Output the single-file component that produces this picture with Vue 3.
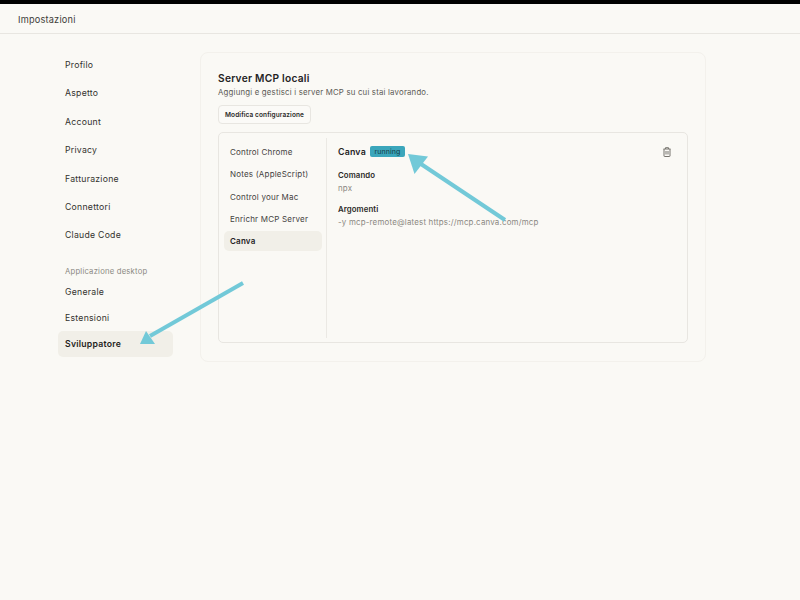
<script setup>
const primary = ['Profilo', 'Aspetto', 'Account', 'Privacy', 'Fatturazione', 'Connettori', 'Claude Code']
const desktop = [
  { label: 'Generale' },
  { label: 'Estensioni' },
  { label: 'Sviluppatore', active: true }
]
const servers = ['Control Chrome', 'Notes (AppleScript)', 'Control your Mac', 'Enrichr MCP Server', 'Canva']
</script>

<template>
  <div class="page">
    <div class="topbar"></div>
    <header class="header">Impostazioni</header>
    <div class="body">
      <nav class="side">
        <a v-for="p in primary" :key="p" class="side-item">{{ p }}</a>
        <div class="side-label">Applicazione desktop</div>
        <a v-for="d in desktop" :key="d.label" class="side-item tight" :class="{ active: d.active }">{{ d.label }}</a>
      </nav>
      <main class="card">
        <h1 class="title">Server MCP locali</h1>
        <p class="sub">Aggiungi e gestisci i server MCP su cui stai lavorando.</p>
        <button class="btn">Modifica configurazione</button>
        <section class="panel">
          <ul class="list">
            <li v-for="s in servers" :key="s" class="list-item" :class="{ active: s === 'Canva' }">{{ s }}</li>
          </ul>
          <div class="detail">
            <div class="detail-head">
              <span class="name">Canva</span>
              <span class="badge">running</span>
              <svg class="trash" width="8" height="10" viewBox="0 0 8 10" fill="none" stroke="#77746e" stroke-width="1">
                <path d="M.5 2h7M1 2v7c0 .3.2.5.5.5h5c.3 0 .5-.2.5-.5V2M2.500 2V.7h3V2M3 4v3.500M5 4v3.500" />
              </svg>
            </div>
            <div class="field-label first">Comando</div>
            <div class="field-value">npx</div>
            <div class="field-label second">Argomenti</div>
            <div class="field-value">-y mcp-remote@latest https://mcp.canva.com/mcp</div>
          </div>
        </section>
      </main>
    </div>
    <svg class="arrows" width="800" height="600" viewBox="0 0 800 600" fill="#72c9d8" stroke="none">
      <line x1="505" y1="220" x2="418" y2="162" stroke="#72c9d8" stroke-width="4" />
      <polygon points="408,154 428,156.500 414.500,174" />
      <line x1="243" y1="283" x2="150" y2="336" stroke="#72c9d8" stroke-width="4" />
      <polygon points="140,344 146,331 155,344" />
    </svg>
  </div>
</template>

<style>
html, body { margin: 0; background: #faf9f5; }
</style>

<style scoped>
.page {
  position: relative;
  width: 800px;
  height: 600px;
  overflow: hidden;
  background: #faf9f5;
  color: #2b2a27;
  font-family: Inter, "Noto Sans", sans-serif;
  font-size: 8.700px;
}
.topbar { height: 4px; background: #000; }
.header {
  height: 29px;
  line-height: 31px;
  padding-left: 18px;
  font-size: 9.200px;
  letter-spacing: 0.2px;
  color: #3d3c38;
  border-bottom: 1px solid #e8e6e1;
}
.body {
  display: flex;
  padding: 18px 0 0 58px;
  gap: 27px;
}
.side { width: 115px; display: flex; flex-direction: column; }
.side-item {
  height: 28.400px;
  line-height: 27px;
  padding-left: 7px;
  border-radius: 5px;
  letter-spacing: 0.25px;
  color: #33322e;
}
.side-item.tight { height: 26px; line-height: 26px; }
.side-item.active { background: #f1efe8; font-weight: 600; color: #1f1e1c; }
.side-label {
  margin-top: 13px;
  height: 15px;
  line-height: 15px;
  padding-left: 7px;
  font-size: 7.700px;
  letter-spacing: 0.2px;
  color: #8b8983;
}
.card {
  width: 506px;
  height: 310px;
  box-sizing: border-box;
  padding: 19px 17px 0;
  border: 1px solid #f3f1ec;
  border-radius: 8px;
}
.title { margin: 0; font-size: 10.200px; line-height: 13px; font-weight: 600; letter-spacing: 0.25px; color: #24231f; }
.sub { margin: 1px 0 0; font-size: 7.800px; line-height: 12px; letter-spacing: 0.2px; color: #5c5a55; }
.btn {
  display: block;
  margin-top: 7px;
  width: 93px;
  height: 19px;
  padding: 0;
  font: 600 6.500px Inter, sans-serif;
  letter-spacing: 0.1px;
  color: #2b2a27;
  background: #fbfaf7;
  border: 1px solid #e8e6e1;
  border-radius: 4px;
}
.panel {
  display: flex;
  margin-top: 8px;
  height: 211px;
  box-sizing: border-box;
  border: 1px solid #e8e6e1;
  border-radius: 5px;
  padding: 5px 0 4px;
}
.list { width: 108px; margin: 0; padding: 4px 4px 0 5px; list-style: none; box-sizing: border-box; border-right: 1px solid #ebe9e4; }
.list-item {
  height: 20px;
  margin-bottom: 2.250px;
  line-height: 20px;
  padding-left: 6px;
  border-radius: 5px;
  font-size: 8px;
  letter-spacing: 0.2px;
  color: #44423e;
}
.list-item.active { background: #f1efe8; font-weight: 600; color: #24231f; }
.detail { flex: 1; padding: 7px 15px 0 11px; }
.detail-head { display: flex; align-items: center; height: 13px; }
.name { font-size: 8.800px; font-weight: 600; letter-spacing: 0.2px; color: #24231f; }
.badge {
  margin-left: 4px;
  width: 35px;
  height: 11px;
  line-height: 11px;
  text-align: center;
  background: #3ba6bb;
  border-radius: 2px;
  font-size: 7px;
  letter-spacing: 0.1px;
  color: #143b44;
}
.trash { margin-left: auto; margin-right: 1px; }
.field-label { font-size: 7.800px; line-height: 11px; font-weight: 600; letter-spacing: 0.1px; color: #2b2a27; }
.field-label.first { margin-top: 12px; }
.field-label.second { margin-top: 10px; }
.field-value { margin-top: 2px; font-size: 7.900px; line-height: 11px; letter-spacing: 0.2px; color: #8a8882; }
.arrows { position: absolute; left: 0; top: 0; pointer-events: none; }
</style>
